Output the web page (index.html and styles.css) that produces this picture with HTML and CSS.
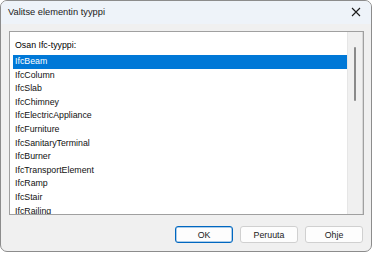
FILE: index.html
```html
<!DOCTYPE HTML>
<html>
  <head>
    <meta charset="utf-8">
    <title>Valitse elementin tyyppi</title>
    <link rel="stylesheet" href="styles.css">
  </head>
  <body>
    <div class="dialog">
      <div class="titlebar">
        <span class="title">Valitse elementin tyyppi</span>
        <svg class="close" width="10" height="10" viewBox="0 0 10 10">
          <path d="M1 1 L9 9 M9 1 L1 9" stroke="#1b1b1b" stroke-width="1.1" fill="none"/>
        </svg>
      </div>
      <div class="content">
        <div class="listbox">
          <div class="items">
            <div class="label">Osan Ifc-tyyppi:</div>
            <div class="item selected">IfcBeam</div>
            <div class="item">IfcColumn</div>
            <div class="item">IfcSlab</div>
            <div class="item">IfcChimney</div>
            <div class="item">IfcElectricAppliance</div>
            <div class="item">IfcFurniture</div>
            <div class="item">IfcSanitaryTerminal</div>
            <div class="item">IfcBurner</div>
            <div class="item">IfcTransportElement</div>
            <div class="item">IfcRamp</div>
            <div class="item">IfcStair</div>
            <div class="item">IfcRailing</div>
          </div>
          <div class="scrollbar"><div class="thumb"></div></div>
        </div>
        <div class="buttons">
          <button class="default">OK</button>
          <button>Peruuta</button>
          <button>Ohje</button>
        </div>
      </div>
    </div>
  </body>
</html>
```
FILE: styles.css
```css
* {
  box-sizing: border-box;
  font-family: "Liberation Sans", Arial, sans-serif;
}
body {
  margin: 0;
  background: #fff;
}
.dialog {
  width: 372px;
  height: 252px;
  border: 1px solid #8c8c8c;
  border-radius: 7px;
  overflow: hidden;
  background: #f0f0f0;
  display: flex;
  flex-direction: column;
}
.titlebar {
  height: 24px;
  background: #eef3f9;
  display: flex;
  align-items: center;
  justify-content: space-between;
  padding: 0 8px 1px 7px;
}
.title {
  font-size: 9.3px;
  color: #1a1a1a;
}
.close { margin-right: 2px; }
.content {
  flex: 1;
  padding: 7px 7px 8px 8px;
  display: flex;
  flex-direction: column;
}
.listbox {
  height: 184px;
  background: #fff;
  border: 1px solid #a0a0a0;
  box-shadow: inset -1px 0 0 #e3e3e3;
  display: flex;
  overflow: hidden;
}
.items {
  flex: 1;
  padding: 3px 0 0 3px;
}
.label {
  height: 20px;
  padding: 5px 0 0 2px;
  font-size: 8.8px;
  color: #000;
}
.item {
  height: 13.6px;
  line-height: 13.6px;
  padding-left: 2px;
  font-size: 8.8px;
  color: #111;
  white-space: nowrap;
}
.item.selected {
  background: #0078d7;
  color: #fff;
}
.scrollbar {
  width: 16px;
  background: #f0f0f0;
  border-left: 1px solid #e6e6e6;
  border-right: 1px solid #d8d8d8;
  padding: 15px 0 0 6px;
}
.thumb {
  width: 2px;
  height: 54px;
  background: #8a8a8a;
  border-radius: 1px;
}
.buttons {
  display: flex;
  justify-content: flex-end;
  gap: 7px;
  margin-top: 11px;
  padding-right: 1px;
}
button {
  width: 58px;
  height: 17px;
  padding: 0;
  font-size: 8.8px;
  color: #1a1a1a;
  background: #fdfdfd;
  border: 1px solid #d0d0d0;
  border-radius: 3px;
}
button.default {
  border-color: #0067c0;
  box-shadow: inset 0 0 0 0.5px #5b9bd5;
}
```
